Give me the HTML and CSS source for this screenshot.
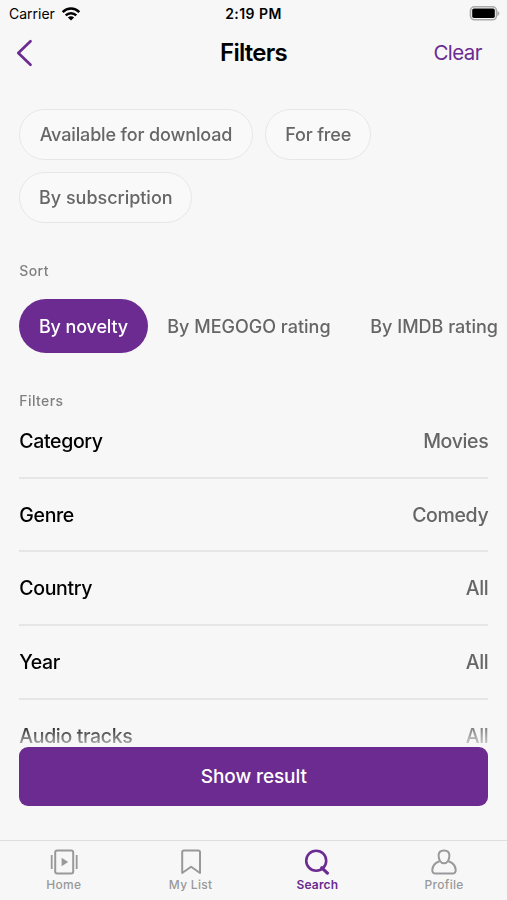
FILE: index.html
```
<!DOCTYPE html>
<html lang="en">
<head>
<meta charset="utf-8">
<title>Filters</title>
<link rel="stylesheet" href="styles.css">
</head>
<body>
<div class="screen">
  <div class="status">
    <div class="carrier"><span>Carrier</span>
      <svg width="20" height="14" viewBox="0 0 20 14"><g fill="none" stroke="#000" stroke-width="2.5"><path d="M1.7 5.1C6.4.4 13.6.4 18.3 5.1"/><path d="M4.7 8.3c3-2.9 7.6-2.9 10.6 0"/></g><path d="M10 13.6 6.9 10.5c1.8-1.6 4.4-1.6 6.2 0z"/></svg>
    </div>
    <div class="time">2:19 PM</div>
    <svg class="battery" width="31" height="15" viewBox="0 0 31 15"><rect x="1.5" y=".8" width="26" height="13" rx="4" fill="#f7f7f7" stroke="#aaa" stroke-width="1.6"/><rect x="3.2" y="2.5" width="22.6" height="9.6" rx="1.8" fill="#000"/><path d="M28.4 5v5c2.6-.9 2.6-4.1 0-5z" fill="#aaa"/></svg>
  </div>
  <header class="header">
    <svg class="back" width="18" height="28" viewBox="0 0 18 28"><path d="M15.5 2.2 3.3 14l12.2 11.8" fill="none" stroke="#6b2b90" stroke-width="2.7" stroke-linecap="round" stroke-linejoin="round"/></svg>
    <h1>Filters</h1>
    <a class="clear">Clear</a>
  </header>
  <main class="content">
    <div class="chips">
      <div class="chip chip-download"><span>Available for download</span></div>
      <div class="chip chip-free"><span>For free</span></div>
      <div class="chip chip-subscription"><span>By subscription</span></div>
    </div>
    <h2 class="sort-title">Sort</h2>
    <div class="sort">
      <div class="option active">By novelty</div>
      <div class="option megogo">By MEGOGO rating</div>
      <div class="option imdb">By IMDB rating</div>
    </div>
    <h2 class="filters-title">Filters</h2>
    <div class="rows">
      <div class="row"><span class="name">Category</span><span class="value">Movies</span></div>
      <div class="row"><span class="name">Genre</span><span class="value">Comedy</span></div>
      <div class="row"><span class="name">Country</span><span class="value">All</span></div>
      <div class="row"><span class="name">Year</span><span class="value">All</span></div>
      <div class="row"><span class="name">Audio tracks</span><span class="value">All</span></div>
    </div>
  </main>
  <div class="action"><button>Show result</button></div>
  <nav class="tabs">
    <div class="tab">
      <svg width="28" height="26" viewBox="0 0 28 26"><g fill="none" stroke="#999" stroke-width="2"><rect x="5.2" y="1.4" width="18" height="23" rx="2"/><path d="M1.7 6v14M26.7 6v14" stroke-width="1.8"/></g><path d="M11.6 8.8v8.4l6.6-4.2z" fill="#999"/></svg>
      <span>Home</span>
    </div>
    <div class="tab">
      <svg width="28" height="26" viewBox="0 0 28 26"><path d="M5.2 24V3.2q0-1.8 1.8-1.8h14.2q1.8 0 1.8 1.8V24l-8.9-6.3z" fill="none" stroke="#999" stroke-width="2" stroke-linejoin="round"/></svg>
      <span>My List</span>
    </div>
    <div class="tab selected">
      <svg width="28" height="26" viewBox="0 0 28 26"><g fill="none" stroke="#6b2b90" stroke-width="2.6"><circle cx="13.2" cy="11.7" r="10"/><path d="m18.8 18.8 5.6 5.3" stroke-width="3.2" stroke-linecap="round"/></g></svg>
      <span>Search</span>
    </div>
    <div class="tab">
      <svg width="28" height="26" viewBox="0 0 28 26"><g fill="none" stroke="#999" stroke-width="2" stroke-linejoin="round"><path d="M14 1.4c-3.3 0-5.4 2-5.4 5.2 0 4 2 7.7 5.4 7.7s5.4-3.7 5.4-7.7c0-3.2-2.1-5.2-5.4-5.2z"/><path d="M9.6 12.2C5.5 13.5 2.6 16 2.3 21c-.1 2.1 1 3.5 3.2 3.5h17c2.2 0 3.3-1.4 3.2-3.5-.3-5-3.2-7.5-7.3-8.8"/></g></svg>
      <span>Profile</span>
    </div>
  </nav>
</div>
</body>
</html>
```
FILE: styles.css
```
* { box-sizing: border-box; }
body { margin: 0; background: #f7f7f7; font-family: Inter, "Liberation Sans", sans-serif; color: #000; }
svg { display: block; flex: none; }
h1, h2 { margin: 0; }
.screen { width: 507px; height: 900px; display: flex; flex-direction: column; overflow: hidden; }
.status { height: 27px; flex: none; display: grid; grid-template-columns: 1fr auto 1fr; align-items: center; padding: 0 7px 0 9px; font-size: 14px; }
.carrier { display: flex; align-items: center; gap: 6px; }
.time { font-weight: 600; letter-spacing: .45px; padding-right: 2px; }
.battery { justify-self: end; }
.header { height: 53px; flex: none; display: grid; grid-template-columns: 1fr auto 1fr; align-items: center; padding: 0 25px 2px 15px; }
.header h1 { font-size: 24px; font-weight: 600; letter-spacing: -0.75px; padding-left: 10px; }
.clear { justify-self: end; font-size: 20.5px; letter-spacing: -.55px; color: #6b2b90; }
.content { height: 667px; flex: none; padding: 28.5px 18.7px 0 19.3px; overflow: hidden; -webkit-mask-image: linear-gradient(#000 642px, transparent 674px); mask-image: linear-gradient(#000 642px, transparent 674px); }
.chips { display: flex; flex-wrap: wrap; gap: 12.5px; }
.chip { height: 51px; border: 1.5px solid #e6e6e6; border-radius: 26px; background: #f9f9f9; color: #666; font-size: 18px; font-weight: 500; letter-spacing: -.14px; display: flex; align-items: center; justify-content: center; white-space: nowrap; }
.chip-download { width: 233.4px; }
.chip-free { width: 106px; }
.chip-subscription { width: 173px; letter-spacing: -.03px; }
h2 { font-size: 14px; line-height: 18px; font-weight: 500; color: #808080; letter-spacing: .4px; }
.sort-title { margin-top: 39px; }
.sort { display: flex; margin-top: 19px; height: 54px; align-items: center; font-size: 18px; font-weight: 500; color: #666; white-space: nowrap; }
.option { flex: none; }
.active { width: 128.4px; height: 54px; border-radius: 27px; background: #6b2b90; color: #fff; letter-spacing: -.15px; display: flex; align-items: center; justify-content: center; }
.megogo { width: 203px; padding-left: 19.6px; }
.imdb { padding-left: 19.6px; }
.filters-title { margin-top: 39px; }
.rows { margin-top: -5px; }
.row { height: 73.7px; border-bottom: 2px solid #e6e6e6; display: flex; justify-content: space-between; align-items: center; font-size: 19.5px; font-weight: 500; letter-spacing: -.35px; }
.value { color: #666; font-weight: 450; }
.action { height: 93px; flex: none; padding: 0 18.7px 0 19.3px; }
.action button { display: block; width: 100%; height: 59px; border: 0; border-radius: 9px; background: #6b2b90; color: #fff; font: 500 19px Inter, sans-serif; letter-spacing: -.1px; }
.tabs { flex: 1; border-top: 1.5px solid #dedede; display: grid; grid-template-columns: repeat(4, 1fr); }
.tab { display: flex; flex-direction: column; align-items: center; padding: 8px 0 0 1px; gap: 2px; font-size: 12px; line-height: 16px; font-weight: 500; color: #999; letter-spacing: .3px; }
.selected { color: #6b2b90; font-weight: 600; letter-spacing: .15px; }
```
